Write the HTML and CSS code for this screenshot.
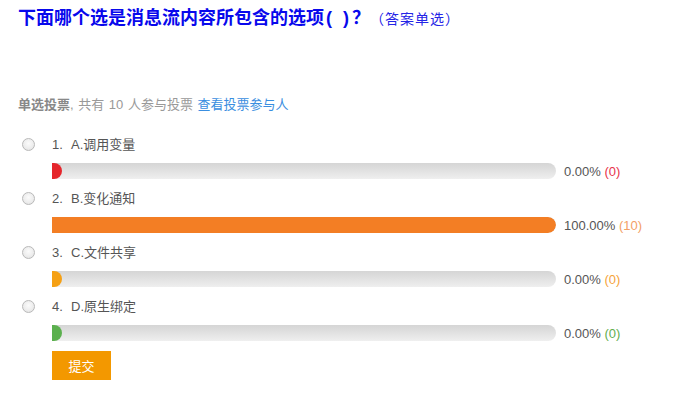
FILE: index.html
```html
<!DOCTYPE html>
<html lang="zh-CN">
<head>
<meta charset="utf-8">
<title>投票</title>
<link rel="stylesheet" href="styles.css">
</head>
<body>
<div class="page">
  <h1 class="title">下面哪个选是消息流内容所包含的选项<span class="paren">( )？</span><span class="sub">（答案单选）</span></h1>
  <p class="stats"><b>单选投票</b>, 共有 10 人参与投票 <a class="link" href="#">查看投票参与人</a></p>
  <div class="options">
    <div class="option">
      <span class="radio"></span>
      <div class="body">
        <div class="label"><span class="num">1.</span>A.调用变量</div>
        <div class="barrow">
          <div class="track"><div class="fill red" style="width:10px"></div></div>
          <span class="pct">0.00% <span class="c-red">(0)</span></span>
        </div>
      </div>
    </div>
    <div class="option">
      <span class="radio"></span>
      <div class="body">
        <div class="label"><span class="num">2.</span>B.变化通知</div>
        <div class="barrow">
          <div class="track"><div class="fill orange" style="width:100%"></div></div>
          <span class="pct">100.00% <span class="c-orange">(10)</span></span>
        </div>
      </div>
    </div>
    <div class="option">
      <span class="radio"></span>
      <div class="body">
        <div class="label"><span class="num">3.</span>C.文件共享</div>
        <div class="barrow">
          <div class="track"><div class="fill amber" style="width:10px"></div></div>
          <span class="pct">0.00% <span class="c-amber">(0)</span></span>
        </div>
      </div>
    </div>
    <div class="option">
      <span class="radio"></span>
      <div class="body">
        <div class="label"><span class="num">4.</span>D.原生绑定</div>
        <div class="barrow">
          <div class="track"><div class="fill green" style="width:10px"></div></div>
          <span class="pct">0.00% <span class="c-green">(0)</span></span>
        </div>
      </div>
    </div>
  </div>
  <div class="actions">
    <button class="submit" type="button">提交</button>
  </div>
</div>
</body>
</html>
```

FILE: styles.css
```css
html, body {
  margin: 0;
  padding: 0;
  background: #fff;
}
body {
  font-family: "Liberation Sans", Arial, "Noto Sans CJK SC", sans-serif;
  color: #555;
}
.page {
  padding: 6px 18px 0 18px;
}
.title {
  margin: 0;
  font-size: 18px;
  line-height: 24px;
  font-weight: bold;
  color: #0808ec;
  font-family: "Liberation Sans", "Noto Sans CJK SC", sans-serif;
  white-space: nowrap;
}
.paren {
  letter-spacing: 3px;
  margin-left: 2px;
}
.sub {
  font-size: 14px;
  font-weight: normal;
  color: #2424e6;
  margin-left: -3px;
  letter-spacing: 1px;
}
.stats {
  margin: 64px 0 0 0;
  font-size: 13px;
  line-height: 20px;
  color: #999;
  word-spacing: 1px;
}
.stats b {
  color: #888;
  font-weight: bold;
}
.link {
  color: #3a8ee0;
  text-decoration: none;
}
.options {
  margin-top: 21px;
}
.option {
  display: grid;
  grid-template-columns: 34px 1fr;
  margin-bottom: 11px;
}
.radio {
  width: 13px;
  height: 13px;
  box-sizing: border-box;
  border: 1px solid #b9b9b9;
  border-radius: 50%;
  background: radial-gradient(circle at 50% 40%, #fbfbfb 0%, #ececec 60%, #dcdcdc 100%);
  margin: 2px 0 0 4px;
}
.label {
  font-size: 13px;
  line-height: 18px;
  height: 18px;
  color: #555;
}
.num {
  display: inline-block;
  width: 19px;
}
.barrow {
  display: flex;
  align-items: center;
  margin-top: 9px;
  height: 16px;
}
.track {
  width: 504px;
  height: 16px;
  border-radius: 0 8px 8px 0;
  background: linear-gradient(#d5d5d5, #e3e3e3 55%, #efefef);
  overflow: hidden;
  flex: none;
}
.fill {
  height: 100%;
  border-radius: 0 8px 8px 0;
}
.red { background: #e5262c; }
.orange { background: #f37e24; }
.amber { background: #f5a014; }
.green { background: #5bb04e; }
.pct {
  margin-left: 8px;
  font-size: 13px;
  color: #555;
  white-space: nowrap;
}
.c-red { color: #e8334a; }
.c-orange { color: #f3a066; }
.c-amber { color: #f5a43a; }
.c-green { color: #5fae4f; }
.actions {
  padding-left: 34px;
  margin-top: -1px;
}
.submit {
  width: 59px;
  height: 29px;
  border: 0;
  border-radius: 0;
  background: #f39800;
  color: #fff;
  font-size: 13px;
  font-family: "Liberation Sans", "Noto Sans CJK SC", sans-serif;
  padding: 0;
}
```
